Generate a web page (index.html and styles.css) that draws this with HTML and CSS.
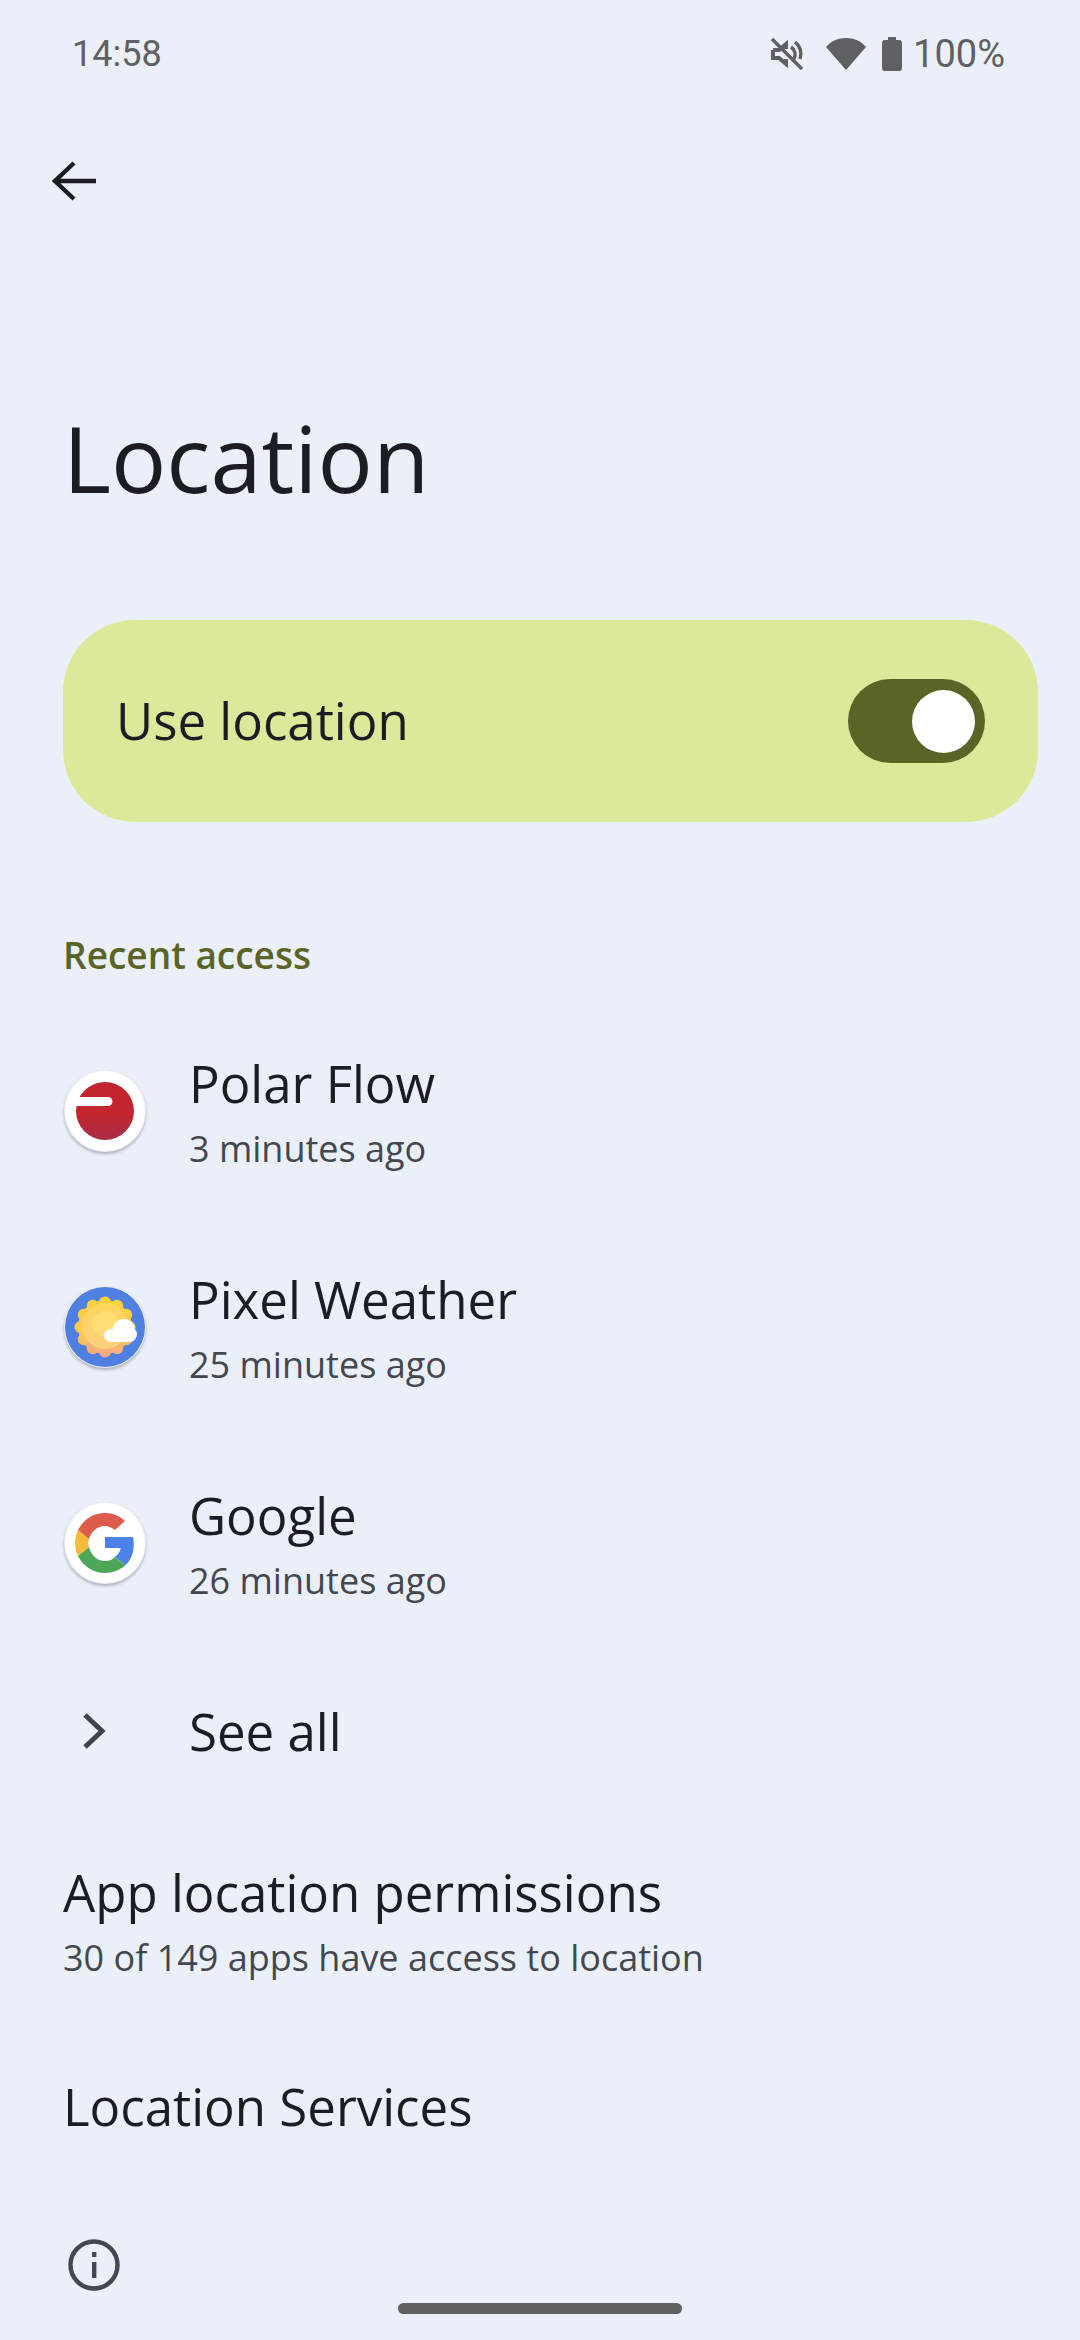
FILE: index.html
```html
<!DOCTYPE html>
<html lang="en">
<head>
	<meta charset="utf-8">
	<title>Location</title>
	<link rel="stylesheet" href="styles.css">
</head>
<body>
	<div id="wrapper">
		<div class="status-bar">
			<span class="clock">14:58</span>
			<div class="status-icons">
				<svg class="icon-mute" viewBox="0 0 34 34">
					<path d="M3 13h6l7-6v5M16 22v5l-7-6H3v-8" fill="none" stroke="#5f6064" stroke-width="4"/>
					<path d="M21 10a9 9 0 0 1 3 12M25 5a15 15 0 0 1 5 17" fill="none" stroke="#5f6064" stroke-width="3.400"/>
					<path d="M2 2l30 30" stroke="#5f6064" stroke-width="3.400"/>
				</svg>
				<svg class="icon-wifi" viewBox="0 0 40 34">
					<path d="M0 10C5 4 12 1 20 1s15 3 20 9L20 33z" fill="#5f6064"/>
				</svg>
				<svg class="icon-battery" viewBox="0 0 20 34">
					<path d="M6 0h8v3h3a3 3 0 0 1 3 3v25a3 3 0 0 1-3 3H3a3 3 0 0 1-3-3V6a3 3 0 0 1 3-3h3z" fill="#5f6064"/>
				</svg>
				<span class="battery-text">100%</span>
			</div>
		</div>

		<div class="toolbar">
			<svg class="icon-back" viewBox="0 0 44 40">
				<path d="M44 20H4M22 2L3 20l19 18" fill="none" stroke="#1b1d22" stroke-width="4.400"/>
			</svg>
		</div>

		<h1>Location</h1>

		<div class="main-switch">
			<span class="switch-label">Use location</span>
			<div class="toggle"><div class="knob"></div></div>
		</div>

		<h2>Recent access</h2>

		<div class="app-row">
			<svg class="app-icon" viewBox="0 0 82 82">
				<defs>
					<linearGradient id="polar" x1="0" y1="0" x2="0" y2="1">
						<stop offset="0.55" stop-color="#c3252f"/>
						<stop offset="1" stop-color="#a92d45"/>
					</linearGradient>
				</defs>
				<circle cx="41" cy="41" r="40" fill="#fff"/>
				<circle cx="41" cy="41" r="29" fill="url(#polar)"/>
				<path d="M11 27h33a4.500 4.500 0 0 1 0 9H11z" fill="#fff"/>
			</svg>
			<div class="row-text">
				<div class="row-title">Polar Flow</div>
				<div class="row-sub">3 minutes ago</div>
			</div>
		</div>

		<div class="app-row">
			<svg class="app-icon" viewBox="0 0 82 82">
				<defs>
					<linearGradient id="sun" gradientUnits="userSpaceOnUse" x1="0" y1="11" x2="0" y2="71">
						<stop offset="0" stop-color="#fdd23f"/>
						<stop offset="0.6" stop-color="#fdc94e"/>
						<stop offset="1" stop-color="#f7a58a"/>
					</linearGradient>
					<linearGradient id="sun-inner" x1="0" y1="0" x2="0" y2="1">
						<stop offset="0" stop-color="#fed75a"/>
						<stop offset="1" stop-color="#fdd07c"/>
					</linearGradient>
				</defs>
				<circle cx="41" cy="41" r="40" fill="#4f7fe0"/>
				<g fill="url(#sun)">
					<circle cx="41" cy="41" r="27"/>
					<circle cx="65.500" cy="41" r="6"/>
					<circle cx="62.200" cy="53.200" r="6"/>
					<circle cx="53.200" cy="62.200" r="6"/>
					<circle cx="41" cy="65.500" r="6"/>
					<circle cx="28.800" cy="62.200" r="6"/>
					<circle cx="19.800" cy="53.200" r="6"/>
					<circle cx="16.500" cy="41" r="6"/>
					<circle cx="19.800" cy="28.800" r="6"/>
					<circle cx="28.800" cy="19.800" r="6"/>
					<circle cx="41" cy="16.500" r="6"/>
					<circle cx="53.200" cy="19.800" r="6"/>
					<circle cx="62.200" cy="28.800" r="6"/>
				</g>
				<circle cx="41" cy="40" r="23" fill="url(#sun-inner)"/>
				<circle cx="41" cy="38" r="13" fill="#fede75"/>
				<g fill="#fff">
					<circle cx="46.500" cy="49.500" r="6.500"/>
					<circle cx="60" cy="44" r="11"/>
					<circle cx="65.500" cy="48.500" r="7.500"/>
					<rect x="46" y="46" width="20" height="10"/>
				</g>
			</svg>
			<div class="row-text">
				<div class="row-title">Pixel Weather</div>
				<div class="row-sub">25 minutes ago</div>
			</div>
		</div>

		<div class="app-row">
			<svg class="app-icon" viewBox="0 0 82 82">
				<circle cx="41" cy="41" r="40" fill="#fff"/>
				<path d="M41 35h28c.6 3 .8 5 .8 7 0 9-3 16-8 21l-11-8c3-2 5-5 6-9H41z" fill="#4b81ea"/>
				<path d="M61.800 63C56 68 49 71 41 71c-12 0-22-7-27-17l11-9c2 8 8 14 16 14 4 0 7-1 9.800-4z" fill="#4ea659"/>
				<path d="M14 54c-4-8-4-18 0-26l11 9c-1 3-1 6 0 8z" fill="#f4bb3c"/>
				<path d="M14 28c5-10 15-17 27-17 8 0 15 3 20 8l-10 9c-3-2-6-4-10-4-8 0-14 6-16 13z" fill="#dc5b4a"/>
			</svg>
			<div class="row-text">
				<div class="row-title">Google</div>
				<div class="row-sub">26 minutes ago</div>
			</div>
		</div>

		<div class="see-all">
			<div class="chevron-box">
				<svg class="icon-chevron" viewBox="0 0 24 38">
					<path d="M3 3l17 16L3 35" fill="none" stroke="#3f434c" stroke-width="5"/>
				</svg>
			</div>
			<div class="row-title">See all</div>
		</div>

		<div class="plain-row perms">
			<div class="row-title">App location permissions</div>
			<div class="row-sub">30 of 149 apps have access to location</div>
		</div>

		<div class="plain-row services">
			<div class="row-title">Location Services</div>
		</div>

		<svg class="icon-info" viewBox="0 0 52 52">
			<circle cx="26" cy="26" r="23.500" fill="none" stroke="#43474f" stroke-width="4.400"/>
			<path d="M24 13h4.400v5H24zM24 23h4.400v16H24z" fill="#43474f"/>
		</svg>

		<div class="nav-handle"></div>
	</div>
</body>
</html>
```

FILE: styles.css
```css
* {
	box-sizing: border-box;
}

html, body {
	margin: 0;
	padding: 0;
}

body {
	background-color: #ebeff7;
	color: #1b1d22;
	font-family: "Open Sans", "Noto Sans", sans-serif;
}

#wrapper {
	position: relative;
	height: 2340px;
	overflow: hidden;
}

.status-bar {
	display: flex;
	justify-content: space-between;
	align-items: center;
	height: 54px;
	margin-top: 27px;
	padding: 0 75px 0 72px;
	color: #5f6064;
	font-family: Roboto, sans-serif;
	font-size: 36px;
}

.status-icons {
	display: flex;
	align-items: center;
}

.status-icons svg {
	display: block;
}

.icon-mute { width: 34px; height: 34px; }
.icon-wifi { width: 40px; height: 34px; margin-left: 22px; }
.icon-battery { width: 20px; height: 34px; margin-left: 16px; }
.battery-text { margin-left: 11px; font-size: 38px; }

.toolbar {
	padding: 80px 0 0 52px;
	height: 200px;
}

.icon-back {
	display: block;
	width: 44px;
	height: 40px;
}

h1 {
	margin: 0;
	padding: 114px 0 0 63px;
	font-size: 92px;
	font-weight: 400;
	line-height: 126px;
	height: 339px;
}

.main-switch {
	display: flex;
	justify-content: space-between;
	align-items: center;
	width: 975px;
	height: 202px;
	margin-left: 63px;
	padding: 0 53px;
	background-color: #dde99a;
	border-radius: 72px;
	font-size: 51px;
}

.switch-label {
	margin-bottom: 3px;
}

.toggle {
	display: flex;
	justify-content: flex-end;
	align-items: center;
	width: 137px;
	height: 84px;
	padding-right: 10px;
	background-color: #5a6427;
	border-radius: 42px;
}

.knob {
	width: 63px;
	height: 63px;
	background-color: #fff;
	border-radius: 50%;
}

h2 {
	margin: 110px 0 0 63px;
	color: #5a6427;
	font-size: 37px;
	font-weight: 600;
	line-height: 46px;
}

.app-row {
	display: flex;
	align-items: center;
	height: 216px;
	padding-left: 64px;
}

h2 + .app-row {
	margin-top: 25px;
}

.app-icon {
	width: 82px;
	height: 82px;
	border-radius: 50%;
	box-shadow: 0 2px 3px rgba(60, 64, 80, 0.35);
}

.row-text {
	margin-left: 43px;
	margin-top: 10px;
}

.row-title {
	font-size: 51px;
	line-height: 66px;
}

.row-sub {
	color: #43474f;
	font-size: 36px;
	line-height: 66px;
}

.see-all {
	display: flex;
	align-items: center;
	height: 80px;
	margin-top: 40px;
	padding-left: 82px;
}

.chevron-box {
	width: 107px;
}

.icon-chevron {
	display: block;
	width: 24px;
	height: 38px;
}

.plain-row {
	padding-left: 63px;
}

.perms {
	margin-top: 88px;
}

.services {
	margin-top: 82px;
}

.icon-info {
	display: block;
	width: 52px;
	height: 52px;
	margin: 100px 0 0 68px;
}

.nav-handle {
	position: absolute;
	left: 398px;
	top: 2303px;
	width: 284px;
	height: 11px;
	background-color: #5f6064;
	border-radius: 6px;
}
```
